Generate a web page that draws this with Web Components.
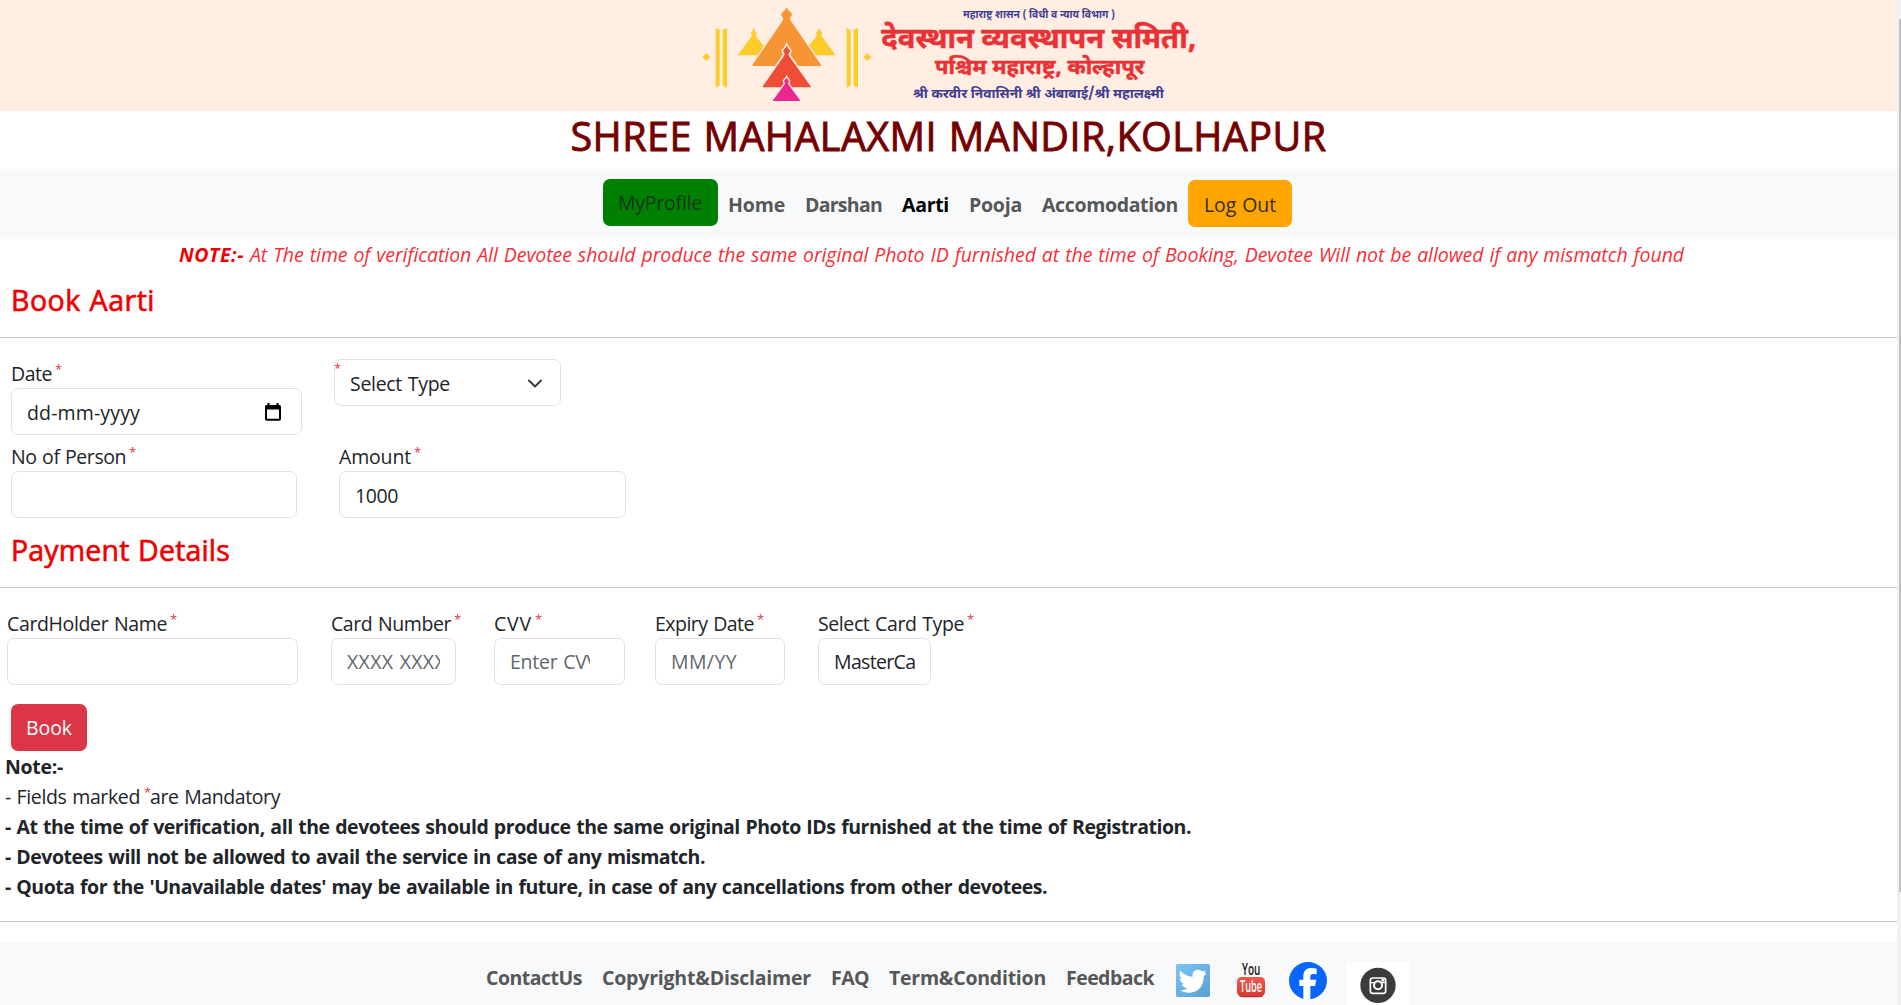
<!DOCTYPE html>
<html lang="en">
<head>
<meta charset="utf-8">
<title>Shree Mahalaxmi Mandir, Kolhapur - Book Aarti</title>
<style>
html,body{margin:0;height:100%;overflow:hidden;background:#fff}
body{font-family:"Open Sans","Noto Sans",sans-serif;font-size:19.5px;line-height:30px;color:#212529}
</style>
</head>
<body>
<aarti-page></aarti-page>
<script>
class Base extends HTMLElement {
  connectedCallback() {
    if (this.shadowRoot) return;
    this.attachShadow({ mode: 'open' }).innerHTML = '<style>' + this.css() + '</style>' + this.html();
  }
  a(n, d = '') { return this.getAttribute(n) ?? d; }
}

class TempleBanner extends Base {
  css() { return `:host{display:flex;justify-content:center;height:111px;background:#ffeee1;padding-left:3px;overflow:hidden;box-sizing:border-box}
    svg{display:block;width:520px;height:111px}
    text{font-family:"Noto Sans Devanagari","Noto Sans","Open Sans",sans-serif;font-weight:700}`; }
  html() { return `<svg viewBox="0 0 1560 333">
    <g fill="#fdcc2b">
      <path d="M37 171l12-11 12 11-12 11zM520 171l12-11 12 11-12 11z"/>
      <path d="M77 84l12 6v166l-12 7zM98 90l13-6v179l-13-7zM470 84l12 6v166l-12 7zM491 90l13-6v179l-13-7z"/>
      <path d="M190 83q3 9 10 15l-3 8 5 8 42 52H143l38-52 5-8-4-8q7-6 8-15z"/>
      <path d="M388 83q3 9 9 15l-3 8 5 8 38 52H330l46-52 5-8-3-8q7-6 10-15z"/>
    </g>
    <path fill="#f79433" stroke="#ffeee1" stroke-width="4" d="M290 18q5 12 17 22c3 6-2 10-5 16l3 7 90 131q2 6-6 6H190q-6-2-4-7l89-130 3-7c-4-6-8-11-6-16q13-10 18-22z"/>
    <path fill="#ef4d36" stroke="#ffeee1" stroke-width="5" d="M290 132q4 10 12 18c3 5-1 8-4 12l3 7 64 90q1 5-5 5H219q-5-1-3-6l62-89 4-7c-4-4-7-8-4-12q8-8 12-18z"/>
    <path fill="#eb268f" stroke="#ffeee1" stroke-width="4" d="M290 229q3 7 9 13l-3 9 37 50q1 4-4 4h-80q-4-1-2-5l36-49-3-9q7-6 10-13z"/>
    <g fill="#3f3d91">
      <text x="819" y="53" font-size="31" textLength="456" lengthAdjust="spacingAndGlyphs">महाराष्ट्र शासन ( विधी व न्याय विभाग )</text>
      <text x="669" y="294" font-size="40" textLength="752" lengthAdjust="spacingAndGlyphs">श्री करवीर निवासिनी श्री अंबाबाई/श्री महालक्ष्मी</text>
    </g>
    <g fill="#ea3236" stroke="#ea3236" stroke-width="1.5">
      <text x="574" y="143" font-size="84" textLength="945" lengthAdjust="spacingAndGlyphs">देवस्थान व्यवस्थापन समिती,</text>
      <text x="735" y="221" font-size="60" textLength="628" lengthAdjust="spacingAndGlyphs">पश्चिम महाराष्ट्र, कोल्हापूर</text>
    </g></svg>`; }
}

class PageTitle extends Base {
  css() { return `:host{display:flex;justify-content:center;height:58px;font-size:39.5px;-webkit-text-stroke:.9px #750000;line-height:51px;color:#750000}`; }
  html() { return `<fit-text w="756"><slot></slot></fit-text>`; }
}

class NavBar extends Base {
  css() { return `:host{display:flex;box-sizing:border-box;height:70px;padding:10px 0 0 603px;background:#f8f9fa;font-weight:700;color:#555758}
    a{display:block;line-height:50px;margin:1px 0 0}
    .btn{box-sizing:border-box;height:47px;border-radius:7px;padding-left:15px;font-weight:400;line-height:48px;color:#212529}
    .green{width:115px;background:#008000;margin-top:0;color:#14351a}.orange{width:104px;background:#ffa500;margin-left:10px;padding-left:16px;line-height:49px;color:#33302a}
    .l{margin-left:20px}.h{margin-left:10px}.on{color:#000}`; }
  html() { return `<a class="btn green"><fit-text w="84">MyProfile</fit-text></a>
    <a class="h"><fit-text w="57">Home</fit-text></a><a class="l"><fit-text w="77">Darshan</fit-text></a>
    <a class="l on"><fit-text w="47">Aarti</fit-text></a><a class="l"><fit-text w="53">Pooja</fit-text></a>
    <a class="l"><fit-text w="136">Accomodation</fit-text></a>
    <a class="btn orange"><fit-text w="72">Log Out</fit-text></a>`; }
}

class VerifyNote extends Base {
  css() { return `:host{display:flex;gap:6px;height:30px;padding-left:179px;line-height:32px;font-style:italic;color:#f3313a}b{color:#f00000}`; }
  html() { return `<b><fit-text w="65">NOTE:-</fit-text></b><fit-text w="1434"><slot></slot></fit-text>`; }
}

class SectionTitle extends Base {
  css() { return `:host{display:block;padding:14px 0 20px 11px;border-bottom:1px solid #c7c8ca;font-size:28.5px;-webkit-text-stroke:.65px #f00000;line-height:34px;color:#f00000}fit-text{display:block}`; }
  html() { return `<fit-text w="${this.a('w')}"><slot></slot></fit-text>`; }
}

class ReqStar extends Base {
  css() { return `:host{display:inline-block;vertical-align:top;width:6px;font-size:13px;line-height:22px;color:#dc3545}`; }
  html() { return '*'; }
}

class FormField extends Base {
  css() { return `:host{display:block;flex:none}
    .label{display:flex;height:30px;line-height:32px;white-space:nowrap;gap:3px}
    .box{box-sizing:border-box;display:flex;justify-content:space-between;align-items:flex-start;height:47px;width:${this.a('w')}px;border:1px solid #dee2e6;border-radius:7px;padding:0 15px;background:#fff;line-height:var(--lh,47px)}
    .clip{overflow:hidden;height:45px;flex:1;max-width:var(--clip,none)}
    .ph{color:#62676c}
    svg{display:block;flex:none}
    .cal{margin:14px 5px 0 0}.chev{margin:18px 2px 0 0}
    .inner{margin-left:-16px;margin-top:-3px}.gap{flex:none;width:10px}`; }
  html() {
    const k = this.a('kind'), t = this.a('value') || this.a('placeholder');
    const label = this.a('label') ? `<div class="label"><fit-text w="${this.a('lw')}">${this.a('label')}</fit-text><req-star></req-star></div>` : '';
    const cal = k === 'date' ? '<svg class="cal" width="16" height="18" viewBox="0 0 16 18"><path fill="#000" fill-rule="evenodd" d="M2.500 0h2v2h7V0h2v2H14.500Q16 2 16 3.500V16q0 1.700-1.500 1.700h-13Q0 17.700 0 16V3.500Q0 2 1.500 2h1zM2 6.500V15.800H14V6.500z"/></svg>' : '';
    const chev = k === 'select' ? '<svg class="chev" width="16" height="12" viewBox="0 0 16 12"><path d="M2 2.500l6 6 6-6" fill="none" stroke="#343a40" stroke-width="2" stroke-linecap="round" stroke-linejoin="round"/></svg>' : '';
    const star = k === 'select' ? '<req-star class="inner"></req-star><span class="gap"></span>' : '';
    return `${label}<div class="box">${star}<div class="clip ${this.a('placeholder') ? 'ph' : ''}">${t ? `<fit-text w="${this.a('tw')}">${t}</fit-text>` : ''}</div>${cal}${chev}</div>`;
  }
}

class FormRow extends Base {
  css() { return `:host{display:flex;align-items:flex-start}`; }
  html() { return '<slot></slot>'; }
}

class BookButton extends Base {
  css() { return `:host{display:block;margin:19px 0 0 11px}
    button{all:unset;box-sizing:border-box;display:block;width:76px;height:47px;padding-left:15px;border-radius:7px;background:#dc3545;color:#fff;line-height:48px}`; }
  html() { return `<button><fit-text w="46"><slot></slot></fit-text></button>`; }
}

class NotesList extends Base {
  css() { return `:host{display:block;padding:0 0 20px 5px;border-bottom:1px solid #c7c8ca;font-weight:700}
    div{height:30px;line-height:32px;white-space:nowrap}.n{font-weight:400;display:flex}.n req-star{margin:0 0 0 4px}`; }
  html() { return `<div><fit-text w="58">Note:-</fit-text></div>
    <div class="n"><fit-text w="135">- Fields marked</fit-text><req-star></req-star><fit-text w="130">are Mandatory</fit-text></div>
    <div><fit-text w="1186">- At the time of verification, all the devotees should produce the same original Photo IDs furnished at the time of Registration.</fit-text></div>
    <div><fit-text w="700">- Devotees will not be allowed to avail the service in case of any mismatch.</fit-text></div>
    <div><fit-text w="1042">- Quota for the 'Unavailable dates' may be available in future, in case of any cancellations from other devotees.</fit-text></div>`; }
}

class SocialIcon extends Base {
  css() { return `:host{display:block;flex:none}svg{display:block;overflow:visible}text{font-family:"Open Sans",sans-serif}`; }
  html() {
    return {
      twitter: `<svg width="34" height="33" viewBox="0 0 102 99"><defs><linearGradient id="g" x1="0" y1="0" x2="1" y2="1"><stop offset="0" stop-color="#7cc4f5"/><stop offset="1" stop-color="#5a9fd3"/></linearGradient></defs><rect width="102" height="99" rx="5" fill="url(#g)"/><path fill="#fff" d="M91 24q-4 2-9 3 5-4 7-9-5 3-11 4c-11-11-32-3-28 16q-22-1-37-18c-5 9-2 19 6 24q-4 0-8-2c0 9 6 16 14 18q-4 1-8 0c2 7 9 12 17 13q-11 8-23 6c34 19 73 0 72-41q5-5 8-14z"/></svg>`,
      youtube: `<svg width="28" height="35" viewBox="0 0 84 105"><defs><linearGradient id="r" x1="0" y1="0" x2="0" y2="1"><stop offset="0" stop-color="#ee5a4e"/><stop offset="1" stop-color="#d93a31"/></linearGradient></defs><rect x="4" y="50" width="76" height="53" rx="12" fill="#a33"/><rect y="42" width="84" height="57" rx="13" fill="url(#r)"/><text x="15" y="37" font-size="50" font-weight="600" fill="#161616" textLength="55" lengthAdjust="spacingAndGlyphs">You</text><text x="9" y="88" font-size="48" font-weight="600" fill="#fff" textLength="66" lengthAdjust="spacingAndGlyphs">Tube</text></svg>`,
      facebook: `<svg width="38" height="37" viewBox="0 0 114 111"><clipPath id="c"><ellipse cx="57" cy="56" rx="57" ry="56"/></clipPath><g clip-path="url(#c)"><rect width="114" height="112" fill="#0866ff"/><path fill="#fff" d="M43 112V72H31V53h12V44c0-19 9-26 25-26q9 0 15 2v17q-5-1-10-1c-7 0-9 3-9 9v8h18l-4 19H64v40z"/></g></svg>`,
      instagram: `<svg width="62" height="43" viewBox="0 0 186 129"><path fill="#fff" d="M0 0h186v129H0z"/><circle cx="93" cy="70" r="53" fill="#3c3c3c"/><rect x="70" y="48" width="46" height="46" rx="7" fill="none" stroke="#fff" stroke-width="5"/><circle cx="93" cy="70" r="12" fill="none" stroke="#fff" stroke-width="6"/><path d="M68 62h14M104 62h14" stroke="#fff" stroke-width="4"/><rect x="103" y="51" width="9" height="8" fill="#fff"/></svg>`
    }[this.a('name')];
  }
}

class SiteFooter extends Base {
  css() { return `:host{display:flex;align-items:flex-start;margin-top:20px;height:63px;padding-left:486px;background:#f8f9fa;color:#555758;font-weight:700;overflow:hidden}
    a{display:block;line-height:72px;height:63px;margin-right:20px}
    a:last-of-type{margin-right:22px}`; }
  html() { return `<a><fit-text w="96">ContactUs</fit-text></a><a><fit-text w="209">Copyright&amp;Disclaimer</fit-text></a><a><fit-text w="38">FAQ</fit-text></a><a><fit-text w="157">Term&amp;Condition</fit-text></a><a><fit-text w="88">Feedback</fit-text></a>
    <social-icon name="twitter" style="margin:22px 0 0 0"></social-icon><social-icon name="youtube" style="margin:21px 0 0 27px"></social-icon><social-icon name="facebook" style="margin:20px 0 0 24px"></social-icon><social-icon name="instagram" style="margin:20px 0 0 20px"></social-icon>`; }
}

class ScrollTrack extends Base {
  css() { return `:host{display:flex;box-sizing:border-box;flex:none;width:4px;height:1005px;padding:19px 0 0 2px;background:#f1f1f1}i{display:block;width:2px;height:873px;background:#c1c1c1}`; }
  html() { return '<i></i>'; }
}

class AartiPage extends Base {
  css() { return `:host{display:flex;width:1901px;height:1005px;overflow:hidden}main{flex:1;min-width:0}`; }
  html() { return `<main>
    <temple-banner></temple-banner>
    <page-title>SHREE MAHALAXMI MANDIR,KOLHAPUR</page-title>
    <nav-bar></nav-bar>
    <verify-note>At The time of verification All Devotee should produce the same original Photo ID furnished at the time of Booking, Devotee Will not be allowed if any mismatch found</verify-note>
    <section-title w="144">Book Aarti</section-title>
    <form-row style="padding:20px 0 0 11px">
      <form-field label="Date" lw="41" w="291" kind="date" value="dd-mm-yyyy" tw="113"></form-field>
      <form-field w="227" kind="select" value="Select Type" tw="100" style="margin:1px 0 0 32px"></form-field>
    </form-row>
    <form-row style="padding:6px 0 1px 11px">
      <form-field label="No of Person" lw="115" w="286"></form-field>
      <form-field label="Amount" lw="72" w="287" value="1000" tw="43" style="margin-left:42px"></form-field>
    </form-row>
    <section-title w="219">Payment Details</section-title>
    <form-row style="padding:20px 0 0 7px;--lh:46px">
      <form-field label="CardHolder Name" lw="160" w="291"></form-field>
      <form-field label="Card Number" lw="120" w="125" placeholder="XXXX XXXX" tw="99" style="margin-right:38px;margin-left:33px;width:125px"></form-field>
      <form-field label="CVV" lw="38" w="131" placeholder="Enter CVV" tw="88" style="--clip:80px"></form-field>
      <form-field label="Expiry Date" lw="99" w="130" placeholder="MM/YY" tw="66" style="margin-left:30px"></form-field>
      <form-field label="Select Card Type" lw="146" w="113" value="MasterCard" tw="100" style="margin-left:33px"></form-field>
    </form-row>
    <book-button>Book</book-button>
    <notes-list></notes-list>
    <site-footer></site-footer>
  </main><scroll-track></scroll-track>`; }
}

/* Single-line text that spreads its letters evenly over the width w. */
class FitText extends HTMLElement {
  connectedCallback() {
    if (this.shadowRoot) return;
    const root = this.attachShadow({ mode: 'open' });
    root.innerHTML = '<style>:host{display:inline-block;flex:none;white-space:nowrap;word-spacing:1px}span{display:inline-block;vertical-align:top}</style><span><slot></slot></span>';
    const span = root.querySelector('span'), w = +this.getAttribute('w');
    const slot = this.querySelector('slot');
    const text = (slot ? slot.assignedNodes().map(n => n.textContent).join('') : this.textContent).trim();
    const natural = span.getBoundingClientRect().width;
    this.style.letterSpacing = ((w - natural) / text.length) + 'px';
    this.style.width = w + 'px';
  }
}

for (const [n, c] of Object.entries({
  'temple-banner': TempleBanner, 'page-title': PageTitle, 'nav-bar': NavBar, 'verify-note': VerifyNote,
  'section-title': SectionTitle, 'req-star': ReqStar, 'form-field': FormField, 'form-row': FormRow,
  'book-button': BookButton, 'notes-list': NotesList, 'social-icon': SocialIcon, 'site-footer': SiteFooter,
  'scroll-track': ScrollTrack, 'aarti-page': AartiPage, 'fit-text': FitText
})) customElements.define(n, c);
</script>
</body>
</html>
